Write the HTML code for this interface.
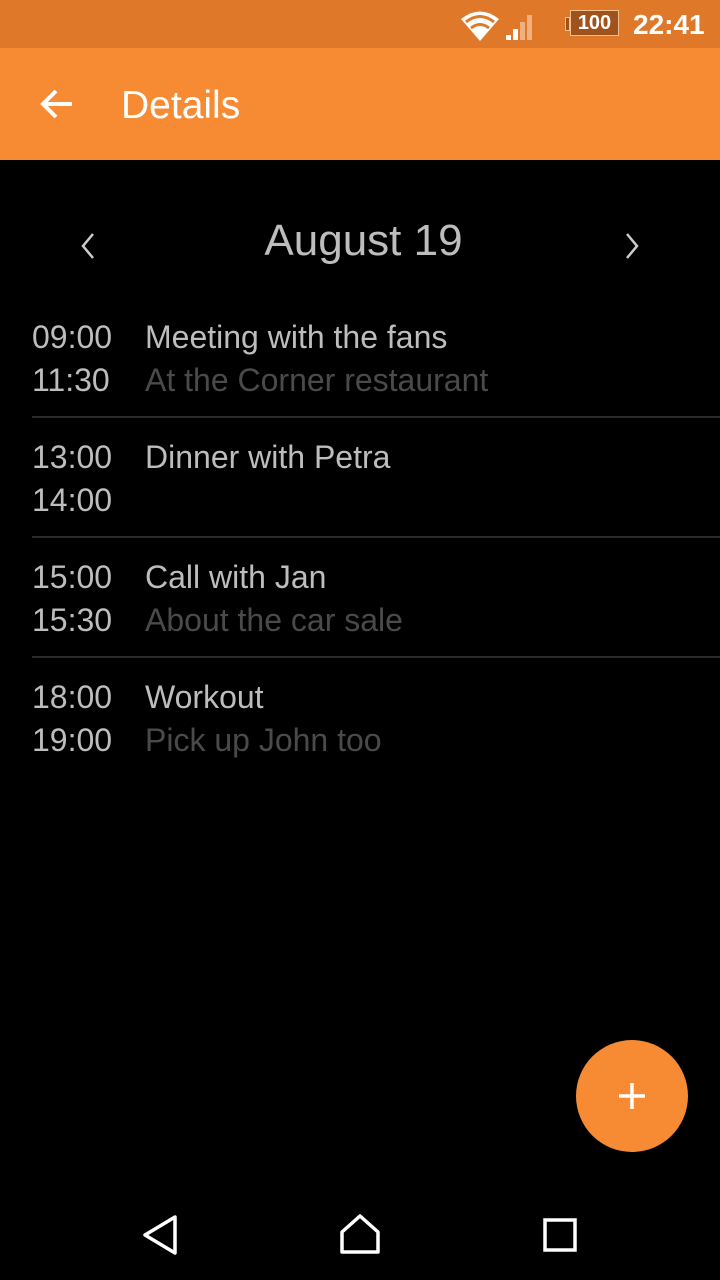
<!DOCTYPE html>
<html><head><meta charset="utf-8"><style>
*{margin:0;padding:0;box-sizing:border-box}
body{width:720px;height:1280px;background:#000;position:relative;overflow:hidden;font-family:"Liberation Sans",sans-serif}
.status{position:absolute;left:0;top:0;width:720px;height:48px;background:#e0782a}
.bar{position:absolute;left:0;top:48px;width:720px;height:112px;background:#f68b33}
.t{position:absolute;font-size:32px;color:#bdbdbd;white-space:nowrap;line-height:1}
.s{color:#4a4a4a}
.div{position:absolute;left:32px;width:688px;height:2px;background:#2a2a2a}
.fab{position:absolute;left:576px;top:1040px;width:112px;height:112px;border-radius:50%;background:#f68b33;box-shadow:0 2px 4px rgba(0,0,0,.5)}
</style></head><body>
<div class="status">
<svg style="position:absolute;left:460px;top:10px" width="40" height="32" viewBox="0 0 40 32"><path d="M20 31 L1 9 Q20 -6 39 9 Z" fill="#fff"/><path d="M6 12 Q20 1 34 12" fill="none" stroke="#e0782a" stroke-width="3"/><path d="M11 18 Q20 11 29 18" fill="none" stroke="#e0782a" stroke-width="3"/></svg>
<svg style="position:absolute;left:506px;top:10px" width="32" height="30"><rect x="0" y="25" width="5" height="5" fill="#fff"/><rect x="7" y="19" width="5" height="11" fill="#fff"/><rect x="14" y="12" width="5" height="18" fill="#f0b080"/><rect x="21" y="5" width="5" height="25" fill="#f0b080"/><rect x="28" y="0" width="2" height="30" fill="#f0b080" opacity="0"/></svg>
<div style="position:absolute;left:565px;top:17px;width:5px;height:14px;background:#a0521c;border:1px solid #f0c090"></div>
<div style="position:absolute;left:570px;top:10px;width:49px;height:26px;background:#a0521c;border:1px solid #f0c090;color:#fff;font-size:20px;font-weight:bold;text-align:center;line-height:24px">100</div>
<div class="t" style="left:633px;top:11px;color:#fff;font-size:28px;font-weight:bold">22:41</div>
</div>
<div class="bar">
<svg style="position:absolute;left:38px;top:40px" width="36" height="32" viewBox="0 0 36 32"><path d="M34 16H5M18 3L5 16l13 13" fill="none" stroke="#fff" stroke-width="4"/></svg>
<div class="t" style="left:121px;top:38px;color:#fff;font-size:39px">Details</div>
</div>
<svg style="position:absolute;left:80px;top:232px" width="16" height="28"><path d="M13 2L3 14l10 12" fill="none" stroke="#ccc" stroke-width="2.5"/></svg>
<svg style="position:absolute;left:624px;top:232px" width="16" height="28"><path d="M3 2l10 12L3 26" fill="none" stroke="#ccc" stroke-width="2.5"/></svg>
<div class="t" style="left:0;width:727px;text-align:center;top:219px;font-size:44px">August 19</div>

<div class="t" style="left:32px;top:321px">09:00</div><div class="t" style="left:145px;top:321px">Meeting with the fans</div>
<div class="t" style="left:32px;top:364px">11:30</div><div class="t s" style="left:145px;top:364px">At the Corner restaurant</div>
<div class="div" style="top:416px"></div>
<div class="t" style="left:32px;top:441px">13:00</div><div class="t" style="left:145px;top:441px">Dinner with Petra</div>
<div class="t" style="left:32px;top:484px">14:00</div>
<div class="div" style="top:536px"></div>
<div class="t" style="left:32px;top:561px">15:00</div><div class="t" style="left:145px;top:561px">Call with Jan</div>
<div class="t" style="left:32px;top:604px">15:30</div><div class="t s" style="left:145px;top:604px">About the car sale</div>
<div class="div" style="top:656px"></div>
<div class="t" style="left:32px;top:681px">18:00</div><div class="t" style="left:145px;top:681px">Workout</div>
<div class="t" style="left:32px;top:724px">19:00</div><div class="t s" style="left:145px;top:724px">Pick up John too</div>

<div class="fab"><svg style="position:absolute;left:41px;top:41px" width="30" height="30"><path d="M15 2v26M2 15h26" stroke="#fff" stroke-width="3.5"/></svg></div>

<svg style="position:absolute;left:140px;top:1214px" width="40" height="42"><path d="M35 3L5 21l30 18z" fill="none" stroke="#fff" stroke-width="3.5" stroke-linejoin="round"/></svg>
<svg style="position:absolute;left:338px;top:1212px" width="44" height="44"><path d="M4 40V20L22 4l18 16v20z" fill="none" stroke="#fff" stroke-width="3.5" stroke-linejoin="round"/></svg>
<svg style="position:absolute;left:542px;top:1217px" width="36" height="36"><rect x="3" y="3" width="30" height="30" fill="none" stroke="#fff" stroke-width="3.5"/></svg>
</body></html>
